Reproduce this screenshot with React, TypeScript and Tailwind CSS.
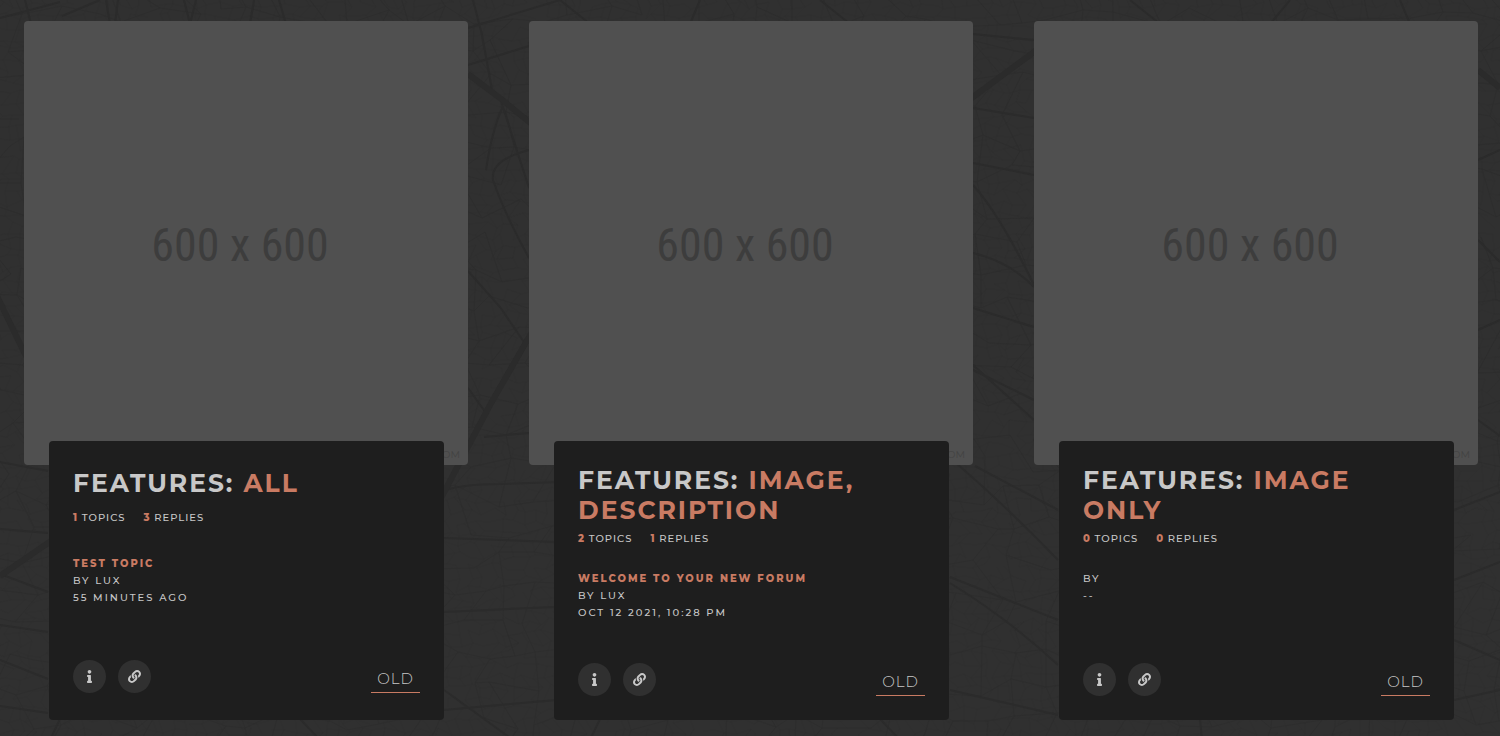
import { FaInfo, FaLink } from "react-icons/fa";

interface Forum {
    id: number;
    feature: string;
    topics: number;
    replies: number;
    lastTopic: string;
    author: string;
    date: string;
}

const forums: Forum[] = [
    { id: 1, feature: "All", topics: 1, replies: 3, lastTopic: "Test Topic", author: "Lux", date: "55 minutes ago" },
    {
        id: 2,
        feature: "Image, Description",
        topics: 2,
        replies: 1,
        lastTopic: "Welcome to your new forum",
        author: "Lux",
        date: "Oct 12 2021, 10:28 PM",
    },
    { id: 3, feature: "Image Only", topics: 0, replies: 0, lastTopic: "", author: "", date: "--" },
];

// fine leaf mesh: a jittered grid with some of its edges left out
function buildMesh(step: number, seed: number) {
    let s = seed;
    const rand = () => {
        s = (s * 16807) % 2147483647;
        return s / 2147483647;
    };
    const cols = Math.ceil(1500 / step) + 2;
    const rows = Math.ceil(736 / step) + 2;
    const pts: number[][][] = [];
    for (let r = 0; r < rows; r++) {
        pts.push([]);
        for (let c = 0; c < cols; c++) {
            pts[r].push([
                Math.round((c - 0.5 + (r % 2) * 0.5 + (rand() - 0.5) * 0.7) * step),
                Math.round((r - 0.5 + (rand() - 0.5) * 0.7) * step),
            ]);
        }
    }
    let d = "";
    for (let r = 0; r < rows - 1; r++) {
        for (let c = 0; c < cols - 1; c++) {
            const [x, y] = pts[r][c];
            if (rand() > 0.15) d += `M${x} ${y}L${pts[r][c + 1][0]} ${pts[r][c + 1][1]}`;
            if (rand() > 0.25) d += `M${x} ${y}L${pts[r + 1][c][0]} ${pts[r + 1][c][1]}`;
        }
    }
    return d;
}

const fineMesh = buildMesh(11, 71);
const wideMesh = buildMesh(32, 1234);

const thickVeins = [
    "M468 74L500 98L545 135",
    "M545 312L529 337L490 405L440 500L400 560",
    "M950 114L973 97L1034 52L1070 25",
    "M-5 292L24 352L60 410",
    "M0 576L48 543L90 515",
    "M1478 70L1500 88",
];

const veins = [
    "M473 0L482 35L492 90",
    "M500 98L529 188",
    "M468 65L529 46",
    "M440 36L468 28L560 0",
    "M503 106Q492 130 486 170",
    "M529 150Q490 160 493 180Q505 215 529 258",
    "M468 271L500 307L526 345",
    "M468 388L486 413",
    "M484 437L529 433",
    "M440 492Q460 484 500 484L560 482",
    "M444 538L556 542",
    "M444 612L554 607",
    "M444 710L556 700",
    "M444 690L520 745",
    "M973 34L1034 40",
    "M973 108L1034 118",
    "M973 163L1034 175",
    "M973 185Q1000 215 1034 285",
    "M973 253Q1010 262 1034 287",
    "M973 308L1034 327",
    "M973 365L1034 420",
    "M973 370L1034 400",
    "M950 458Q1000 500 1058 560",
    "M975 466L1058 510",
    "M950 577L1058 620",
    "M950 583Q1010 620 1058 665",
    "M950 690L1058 715",
    "M0 462L48 471",
    "M0 529L48 533",
    "M0 574L48 592",
    "M0 625L48 632",
    "M0 660L48 679",
    "M0 706L48 713",
    "M25 0L31 24",
    "M106 0L110 24M118 0L115 24",
    "M184 0L190 24M196 0L190 24",
    "M254 0L250 24",
    "M279 0L286 24",
    "M0 18L60 2",
    "M62 16L100 0",
    "M560 0L590 24M700 0L690 24M820 0L850 24",
    "M1130 0L1160 24M1290 0L1270 24M1400 0L1410 24",
    "M1478 160L1500 150M1478 240L1500 262M1478 330L1500 320M1478 420L1500 436",
    "M1454 510L1500 492M1454 580L1500 562M1454 640L1500 660M1454 700L1500 690",
    "M60 719L50 740M300 719L320 740M600 719L590 740M880 719L900 740M1200 719L1202 740",
];

function LeafBackground() {
    return (
        <svg
            className="absolute inset-0 w-full h-full"
            viewBox="0 0 1500 736"
            preserveAspectRatio="xMidYMid slice"
            fill="none"
            aria-hidden="true"
        >
            <path d={fineMesh} stroke="#2d2d2d" strokeWidth="1" opacity="0.5" />
            <path d={wideMesh} stroke="#2c2c2c" strokeWidth="1" opacity="0.7" />
            <path d={veins.join("")} stroke="#2b2b2b" strokeWidth="2" />
            <path d={thickVeins.join("")} stroke="#2b2b2b" strokeWidth="6" />
        </svg>
    );
}

function ForumCard({ forum }: { forum: Forum }) {
    return (
        <article className="flex flex-col">
            {/* Image */}
            <div className="relative aspect-square flex items-center justify-center pr-3 pt-1 rounded bg-[#505050]">
                <span className="font-['Roboto_Condensed','Liberation_Sans_Narrow','Liberation_Sans',sans-serif] text-[46px] leading-none text-[#3d3d3d]">
                    600 x 600
                </span>
                <span className="absolute right-2 bottom-1 text-[10px] leading-3 text-[#434343]">.COM</span>
            </div>

            {/* Info */}
            <div className="relative flex-1 flex flex-col justify-around ml-[25px] mr-6 -mt-6 p-6 rounded bg-[#1e1e1e] uppercase text-[#c8c8c8]">
                <h2 className="text-[25px] leading-[30px] font-bold tracking-[2px]">
                    Features: <span className="text-[#c97b63]">{forum.feature}</span>
                </h2>

                <div className="flex items-center gap-[18px] h-[26px] text-[10px] font-medium tracking-[1px]">
                    <span>
                        <b className="font-extrabold text-[#c97b63]">{forum.topics}</b> Topics
                    </span>
                    <span>
                        <b className="font-extrabold text-[#c97b63]">{forum.replies}</b> Replies
                    </span>
                </div>

                <div className="h-[84px] pt-[19px] text-[10px] leading-[17px] font-medium tracking-[2px]">
                    {forum.lastTopic && (
                        <a href="#" className="block font-extrabold text-[#c97b63]">
                            {forum.lastTopic}
                        </a>
                    )}
                    <p>By {forum.author}</p>
                    <p>{forum.date}</p>
                </div>

                <div className="h-7" />

                <div className="flex items-end justify-between">
                    <div className="flex gap-3">
                        <button
                            aria-label="Info"
                            className="flex items-center justify-center size-[33px] rounded-full bg-[#303030] hover:bg-[#3a3a3a]"
                        >
                            <FaInfo size={13} />
                        </button>
                        <button
                            aria-label="Links"
                            className="flex items-center justify-center size-[33px] rounded-full bg-[#303030] hover:bg-[#3a3a3a]"
                        >
                            <FaLink size={13} />
                        </button>
                    </div>
                    <a
                        href="#"
                        className="px-[6px] pb-[3px] border-b border-[#c97b63] text-[15px] leading-5 font-light tracking-[1px]"
                    >
                        Old
                    </a>
                </div>
            </div>
        </article>
    );
}

export default function App() {
    return (
        <main className="relative min-h-screen overflow-hidden bg-[#303030] font-['Montserrat','Inter',sans-serif] antialiased">
            <LeafBackground />
            <div className="relative grid grid-cols-3 gap-[61px] pl-6 pr-[22px] pt-[21px] pb-4">
                {forums.map((forum) => (
                    <ForumCard key={forum.id} forum={forum} />
                ))}
            </div>
        </main>
    );
}
